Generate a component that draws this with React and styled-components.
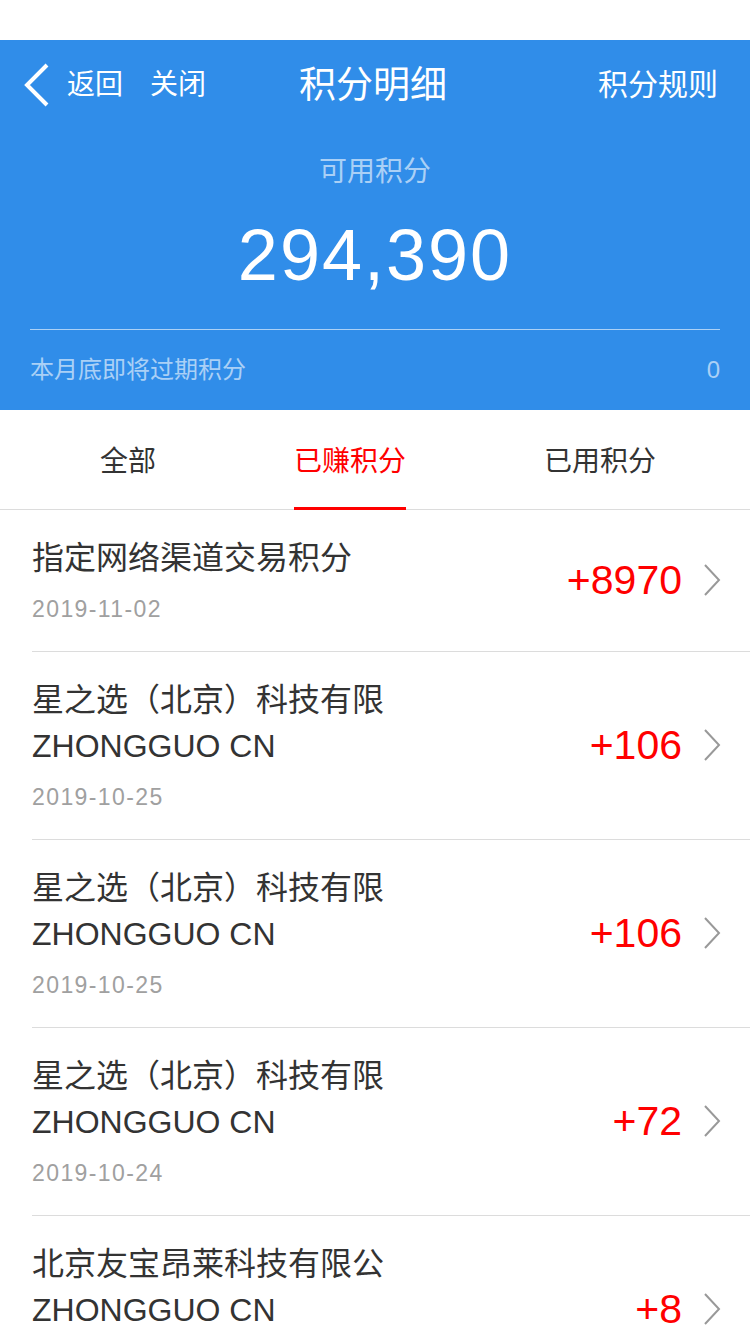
import React from 'react';
import styled, { createGlobalStyle } from 'styled-components';

const GlobalStyle = createGlobalStyle`
  html, body {
    margin: 0;
    padding: 0;
    background: #fff;
    font-family: "Liberation Sans", "Noto Sans CJK SC", sans-serif;
  }
  * { box-sizing: border-box; }
`;

const Page = styled.div`
  width: 750px;
  background: #fff;
`;

const StatusBar = styled.div`
  height: 40px;
  background: #fff;
`;

const Header = styled.header`
  background: #308de9;
  color: #fff;
`;

const NavBar = styled.nav`
  height: 90px;
  display: grid;
  grid-template-columns: 1fr auto 1fr;
  align-items: center;
  padding: 0 32px 0 24px;
`;

const NavLeft = styled.div`
  display: flex;
  align-items: center;
`;

const NavLink = styled.span`
  font-size: ${p => p.$size || 28}px;
  line-height: 40px;
  color: #fff;
  margin-left: ${p => p.$gap || 0}px;
  cursor: pointer;
`;

const NavTitle = styled.h1`
  margin: 0 0 0 4px;
  font-size: 37px;
  font-weight: normal;
  line-height: 50px;
  padding-top: 2px;
`;

const NavRight = styled.div`
  display: flex;
  justify-content: flex-end;
`;

const Summary = styled.div`
  padding: 22px 30px 20px;
  display: flex;
  flex-direction: column;
  align-items: center;
`;

const SummaryLabel = styled.div`
  font-size: 28px;
  line-height: 40px;
  color: rgba(255, 255, 255, 0.6);
`;

const Balance = styled.div`
  margin-top: 18px;
  font-size: 72px;
  line-height: 90px;
  letter-spacing: 2px;
`;

const Divider = styled.div`
  align-self: stretch;
  height: 1px;
  margin: 29px 0 20px;
  background: rgba(255, 255, 255, 0.6);
`;

const ExpireRow = styled.div`
  align-self: stretch;
  display: flex;
  justify-content: space-between;
  align-items: center;
  font-size: 24px;
  line-height: 40px;
  color: rgba(255, 255, 255, 0.6);
`;

const Tabs = styled.div`
  height: 100px;
  display: flex;
  gap: 138px;
  padding-left: 100px;
  box-shadow: inset 0 -1px 0 #dcdcdc;
`;

const Tab = styled.div`
  height: 100px;
  display: flex;
  align-items: center;
  font-size: 28px;
  line-height: 40px;
  color: ${p => (p.$active ? '#f00' : '#333')};
  border-bottom: 3px solid ${p => (p.$active ? '#f00' : 'transparent')};
  padding-top: 6px;
  cursor: pointer;
`;

const List = styled.ul`
  list-style: none;
  margin: 0;
  padding: 0;
`;

const Row = styled.li`
  margin-left: 32px;
  padding: 25px 28px 26px 0;
  display: flex;
  align-items: center;
  border-bottom: 1px solid #dcdcdc;
`;

const Info = styled.div`
  flex: 1;
  min-width: 0;
`;

const Title = styled.div`
  font-size: 32px;
  line-height: 46px;
  color: #333;
`;

const DateText = styled.div`
  margin-top: 12px;
  font-size: 23px;
  line-height: 32px;
  letter-spacing: 1.4px;
  color: #a0a0a0;
`;

const Amount = styled.div`
  font-size: 41px;
  line-height: 50px;
  color: #f00;
`;

const Chevron = styled.svg`
  width: 20px;
  height: 34px;
  margin-left: 20px;
  flex-shrink: 0;
`;

const BackIcon = () => (
  <svg width="26" height="44" viewBox="0 0 26 44">
    <polyline points="23,2 3,22 23,42" fill="none" stroke="#fff" strokeWidth="4" strokeLinejoin="miter" />
  </svg>
);

const records = [
  { lines: ['指定网络渠道交易积分'], date: '2019-11-02', amount: '+8970' },
  { lines: ['星之选（北京）科技有限', 'ZHONGGUO CN'], date: '2019-10-25', amount: '+106' },
  { lines: ['星之选（北京）科技有限', 'ZHONGGUO CN'], date: '2019-10-25', amount: '+106' },
  { lines: ['星之选（北京）科技有限', 'ZHONGGUO CN'], date: '2019-10-24', amount: '+72' },
  { lines: ['北京友宝昂莱科技有限公', 'ZHONGGUO CN'], date: '2019-10-24', amount: '+8' },
];

const tabs = ['全部', '已赚积分', '已用积分'];

export default function App() {
  return (
    <Page>
      <GlobalStyle />
      <StatusBar />
      <Header>
        <NavBar>
          <NavLeft>
            <BackIcon />
            <NavLink $gap={17}>返回</NavLink>
            <NavLink $gap={27}>关闭</NavLink>
          </NavLeft>
          <NavTitle>积分明细</NavTitle>
          <NavRight>
            <NavLink $size={30}>积分规则</NavLink>
          </NavRight>
        </NavBar>
        <Summary>
          <SummaryLabel>可用积分</SummaryLabel>
          <Balance>294,390</Balance>
          <Divider />
          <ExpireRow>
            <span>本月底即将过期积分</span>
            <span>0</span>
          </ExpireRow>
        </Summary>
      </Header>
      <Tabs>
        {tabs.map((t, i) => (
          <Tab key={t} $active={i === 1}>{t}</Tab>
        ))}
      </Tabs>
      <List>
        {records.map((r, i) => (
          <Row key={i}>
            <Info>
              {r.lines.map(l => (
                <Title key={l}>{l}</Title>
              ))}
              <DateText>{r.date}</DateText>
            </Info>
            <Amount>{r.amount}</Amount>
            <Chevron viewBox="0 0 20 34">
              <polyline points="3,2 17,17 3,32" fill="none" stroke="#999" strokeWidth="2" />
            </Chevron>
          </Row>
        ))}
      </List>
    </Page>
  );
}
